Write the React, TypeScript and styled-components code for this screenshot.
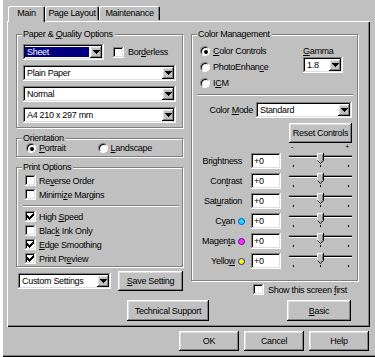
import React from 'react';
import styled, { createGlobalStyle, css } from 'styled-components';

const GlobalStyle = createGlobalStyle`
  html, body {
    margin: 0;
    padding: 0;
    background: #c0c0c0;
  }
  body {
    font-family: "Liberation Sans", Arial, sans-serif;
    font-size: 9px;
    letter-spacing: -0.3px;
    color: #000;
  }
  * { box-sizing: border-box; }
  u { text-decoration: underline; text-underline-offset: 1px; }
`;

const raised = css`
  background: #c0c0c0;
  box-shadow: inset -1px -1px #000, inset 1px 1px #fff, inset -2px -2px #808080, inset 2px 2px #dfdfdf;
`;

const sunken = css`
  background: #fff;
  box-shadow: inset -1px -1px #fff, inset 1px 1px #808080, inset -2px -2px #dfdfdf, inset 2px 2px #000;
`;

const Frame = styled.div`
  width: 375px;
  height: 357px;
  padding: 5px 5px 0 7px;
  display: flex;
  flex-direction: column;
  background: #c0c0c0;
  box-shadow: inset 3px 0 #fff, inset 2px 0 #c0c0c0, inset 0 -1px #000, inset 0 -2px #808080;
`;

const TabStrip = styled.div`
  display: flex;
  align-items: flex-end;
  height: 16px;
  padding-left: 1px;
  position: relative;
  z-index: 1;
`;

const Tab = styled.div<{ $active?: boolean; $w: number }>`
  width: ${p => p.$w}px;
  height: ${p => (p.$active ? 16 : 14)}px;
  margin-bottom: ${p => (p.$active ? -1 : 1)}px;
  padding-bottom: ${p => (p.$active ? 2 : 1)}px;
  display: flex;
  align-items: center;
  justify-content: center;
  background: #c0c0c0;
  border-radius: 2px 2px 0 0;
  box-shadow: inset 1px 1px #fff, inset -1px 0 #000, inset -2px 0 #808080;
  white-space: nowrap;
`;

const Panel = styled.div`
  width: 363px;
  height: 306px;
  padding: 13px 12px 4px 9px;
  display: flex;
  flex-direction: column;
  box-shadow: inset 1px 1px #fff, inset -1px -1px #000, inset -2px -2px #808080;
`;

const Columns = styled.div`
  display: flex;
  gap: 8px;
  align-items: flex-start;
`;

const Column = styled.div`
  width: 167px;
  display: flex;
  flex-direction: column;
`;

const Group = styled.div<{ $mt?: number }>`
  margin-top: ${p => p.$mt ?? 0}px;
  border: 1px solid #808080;
  box-shadow: inset 1px 1px #fff, 1px 1px #fff;
  display: flex;
  flex-direction: column;
`;

const GroupTitle = styled.div`
  align-self: flex-start;
  margin: -6px 0 -5px 5px;
  padding: 0 2px 0 1px;
  line-height: 11px;
  background: #c0c0c0;
  white-space: nowrap;
`;

const GroupBody = styled.div<{ $pad: string; $gap?: number }>`
  padding: ${p => p.$pad};
  display: flex;
  flex-direction: column;
  gap: ${p => p.$gap ?? 0}px;
`;

const Row = styled.div<{ $gap?: number }>`
  display: flex;
  align-items: center;
  gap: ${p => p.$gap ?? 0}px;
`;

const Etched = styled.div<{ $m: string }>`
  margin: ${p => p.$m};
  height: 2px;
  border-top: 1px solid #808080;
  border-bottom: 1px solid #fff;
`;

const Combo = styled.div<{ $w: number }>`
  ${sunken};
  width: ${p => p.$w}px;
  height: 16px;
  padding: 2px;
  display: flex;
  flex-shrink: 0;
`;

const ComboText = styled.div<{ $selected?: boolean }>`
  flex: 1;
  display: flex;
  align-items: center;
  padding-left: 2px;
  white-space: nowrap;
  overflow: hidden;
  ${p => p.$selected && css`
    margin: 1px 1px 1px 0;
    padding-left: 2px;
    background: #000080;
    color: #fff;
  `}
`;

const DropButton = styled.div`
  ${raised};
  width: 12px;
  display: flex;
  align-items: center;
  justify-content: center;
`;

const ComboBox = ({ w, text, selected }: { w: number; text: string; selected?: boolean }) => (
  <Combo $w={w}>
    <ComboText $selected={selected}>{text}</ComboText>
    <DropButton>
      <svg width="7" height="4" viewBox="0 0 7 4" shapeRendering="crispEdges">
        <path d="M0 0h7v1H0zM1 1h5v1H1zM2 2h3v1H2zM3 3h1v1H3z" fill="#000" />
      </svg>
    </DropButton>
  </Combo>
);

const CheckBox = styled.span`
  ${sunken};
  width: 11px;
  height: 11px;
  padding: 2px;
  display: inline-flex;
  flex-shrink: 0;
`;

const Check = ({ on, children, gap = 3 }: { on?: boolean; children: React.ReactNode; gap?: number }) => (
  <Row $gap={gap}>
    <CheckBox>
      {on && (
        <svg width="7" height="7" viewBox="0 0 7 7" shapeRendering="crispEdges">
          <path d="M6 0h1v1H6zM5 1h2v1H5zM0 2h1v1H0zM4 2h3v1H4zM0 3h2v1H0zM3 3h3v1H3zM0 4h5v1H0zM1 5h3v1H1zM2 6h1v1H2z" fill="#000" />
        </svg>
      )}
    </CheckBox>
    <span>{children}</span>
  </Row>
);

const RadioDot = styled.span<{ $on?: boolean }>`
  width: 10px;
  height: 10px;
  border-radius: 50%;
  background: #fff;
  border: 1px solid;
  border-color: #808080 #fff #fff #808080;
  box-shadow: inset 1px 1px #000;
  display: inline-flex;
  align-items: center;
  justify-content: center;
  flex-shrink: 0;
  &::after {
    content: '';
    display: ${p => (p.$on ? 'block' : 'none')};
    width: 4px;
    height: 4px;
    margin: 1px 0 0 1px;
    border-radius: 50%;
    background: #000;
  }
`;

const Radio = ({ on, children }: { on?: boolean; children: React.ReactNode }) => (
  <Row $gap={3}>
    <RadioDot $on={on} />
    <span>{children}</span>
  </Row>
);

const Button = styled.button<{ $w: number; $h?: number }>`
  ${raised};
  width: ${p => p.$w}px;
  height: ${p => p.$h ?? 20}px;
  border: none;
  padding: 0;
  font: inherit;
  letter-spacing: inherit;
  color: #000;
  display: flex;
  align-items: center;
  justify-content: center;
  flex-shrink: 0;
`;

const GammaBox = styled.div`
  display: flex;
  flex-direction: column;
  margin-right: 9px;
  line-height: 11px;
  padding-left: 1px;
`;

const SliderRow = styled.div`
  display: flex;
  align-items: center;
  height: 16px;
`;

const SliderLabel = styled.div`
  flex: 1;
  display: flex;
  align-items: center;
  justify-content: flex-end;
  gap: 3px;
  white-space: nowrap;
`;

const ValueBox = styled.div`
  ${sunken};
  width: 30px;
  height: 16px;
  margin-left: 5px;
  padding: 0 3px;
  display: flex;
  align-items: center;
  flex-shrink: 0;
`;

const Marks = styled.div`
  display: flex;
  justify-content: space-between;
  width: 62px;
  margin: 0 2px 0 0;
  align-self: flex-end;
  font-size: 7px;
  line-height: 7px;
  height: 7px;
  padding: 0 1px 0 3px;
`;

const Footer = styled.div`
  display: flex;
  justify-content: flex-end;
  gap: 5px;
  padding: 4px 1px 0 0;
`;

const Slider = () => (
  <svg width="63" height="16" viewBox="0 0 63 16" style={{ marginLeft: 8, flexShrink: 0 }} shapeRendering="crispEdges">
    <rect x="0" y="2" width="63" height="1" fill="#808080" />
    <rect x="0" y="3" width="63" height="1" fill="#000" />
    <rect x="0" y="4" width="63" height="1" fill="#fff" />
    <rect x="4" y="12" width="1" height="2" fill="#000" />
    <rect x="31" y="12" width="1" height="2" fill="#000" />
    <rect x="59" y="12" width="1" height="2" fill="#000" />
    <polygon points="28,0 35,0 35,7 31.5,10.5 28,7" fill="#c0c0c0" shapeRendering="auto" />
    <path d="M28.5 7.5V0.5H34" stroke="#fff" fill="none" shapeRendering="auto" />
    <path d="M34.5 0V7.5L31.5 10.5L28.5 7.5" stroke="#000" fill="none" shapeRendering="auto" />
    <path d="M33.5 1.5V7L31.5 9" stroke="#808080" fill="none" shapeRendering="auto" />
  </svg>
);

const Dot = ({ fill, stroke }: { fill: string; stroke: string }) => (
  <svg width="7" height="7" viewBox="0 0 7 7" style={{ marginRight: 1 }}>
    <circle cx="3.5" cy="3.5" r="3" fill={fill} stroke={stroke} strokeWidth="1" />
  </svg>
);

const sliders: { label: React.ReactNode; dot?: [string, string] }[] = [
  { label: <>Bri<u>g</u>htness</> },
  { label: <>Con<u>t</u>rast</> },
  { label: <>Sat<u>u</u>ration</> },
  { label: <>C<u>y</u>an</>, dot: ['#20d8ff', '#0050d0'] },
  { label: <>Magen<u>t</u>a</>, dot: ['#ff30ff', '#7000b0'] },
  { label: <>Yello<u>w</u></>, dot: ['#ffff00', '#2020a0'] },
];

const App = () => {
  return (
    <>
      <GlobalStyle />
      <Frame>
        <TabStrip>
          <Tab $active $w={37}>Main</Tab>
          <Tab $w={54}>Page Layout</Tab>
          <Tab $w={61}>Maintenance</Tab>
        </TabStrip>
        <Panel>
          <Columns>
            <Column>
              <Group>
                <GroupTitle>Paper &amp; <u>Q</u>uality Options</GroupTitle>
                <GroupBody $pad="9px 5px 4px 6px" $gap={5}>
                  <Row $gap={9}>
                    <ComboBox w={81} text="Sheet" selected />
                    <Check gap={4}>Bor<u>d</u>erless</Check>
                  </Row>
                  <ComboBox w={153} text="Plain Paper" />
                  <ComboBox w={153} text="Normal" />
                  <ComboBox w={153} text="A4 210 x 297 mm" />
                </GroupBody>
              </Group>
              <Group $mt={10}>
                <GroupTitle>Orientation</GroupTitle>
                <GroupBody $pad="4px 5px 3px 9px">
                  <Row $gap={32}>
                    <Radio on><u>P</u>ortrait</Radio>
                    <Radio><u>L</u>andscape</Radio>
                  </Row>
                </GroupBody>
              </Group>
              <Group $mt={10}>
                <GroupTitle>Print Options</GroupTitle>
                <GroupBody $pad="7px 3px 2px 8px" $gap={3}>
                  <Check>Re<u>v</u>erse Order</Check>
                  <Check>Minimi<u>z</u>e Margins</Check>
                  <Etched $m="2px 0 1px -2px" />
                  <Check on>High <u>S</u>peed</Check>
                  <Check>Blac<u>k</u> Ink Only</Check>
                  <Check on><u>E</u>dge Smoothing</Check>
                  <Check on>Print Pr<u>e</u>view</Check>
                </GroupBody>
              </Group>
              <Row $gap={7} style={{ marginTop: 4, paddingLeft: 2 }}>
                <ComboBox w={93} text="Custom Settings" />
                <Button $w={65}><span><u>S</u>ave Setting</span></Button>
              </Row>
            </Column>
            <Column>
              <Group>
                <GroupTitle>Color Management</GroupTitle>
                <GroupBody $pad="11px 5px 11px 8px">
                  <Row style={{ alignItems: 'flex-start' }}>
                    <GroupBody $pad="0" $gap={6} style={{ flex: 1 }}>
                      <Radio on><u>C</u>olor Controls</Radio>
                      <Radio>PhotoEnhan<u>c</u>e</Radio>
                      <Radio>I<u>C</u>M</Radio>
                    </GroupBody>
                    <GammaBox>
                      <span><u>G</u>amma</span>
                      <ComboBox w={40} text="1.8" />
                    </GammaBox>
                  </Row>
                  <Etched $m="6px -1px 6px -3px" />
                  <Row $gap={3} style={{ justifyContent: 'flex-end' }}>
                    <span>Color <u>M</u>ode</span>
                    <ComboBox w={96} text="Standard" />
                  </Row>
                  <Button $w={63} style={{ alignSelf: 'flex-end', marginTop: 5 }}>Reset Controls</Button>
                  <Marks><span>-</span><span>+</span></Marks>
                  <GroupBody $pad="3px 0 0 0" $gap={4}>
                    {sliders.map((s, i) => (
                      <SliderRow key={i}>
                        <SliderLabel style={{ paddingRight: s.dot ? 0 : 4 }}>
                          <span>{s.label}</span>
                          {s.dot && <Dot fill={s.dot[0]} stroke={s.dot[1]} />}
                        </SliderLabel>
                        <ValueBox>+0</ValueBox>
                        <Slider />
                      </SliderRow>
                    ))}
                  </GroupBody>
                </GroupBody>
              </Group>
              <Row style={{ marginTop: 3, paddingLeft: 62 }}>
                <Check gap={4}>Show this screen <u>f</u>irst</Check>
              </Row>
            </Column>
          </Columns>
          <Row style={{ marginTop: 5, paddingLeft: 111 }}>
            <Button $w={82} $h={21}>Technical Support</Button>
            <Button $w={64} $h={21} style={{ marginLeft: 78 }}><span><u>B</u>asic</span></Button>
          </Row>
        </Panel>
        <Footer>
          <Button $w={60}>OK</Button>
          <Button $w={60}>Cancel</Button>
          <Button $w={60}>Help</Button>
        </Footer>
      </Frame>
    </>
  );
};

export default App;
